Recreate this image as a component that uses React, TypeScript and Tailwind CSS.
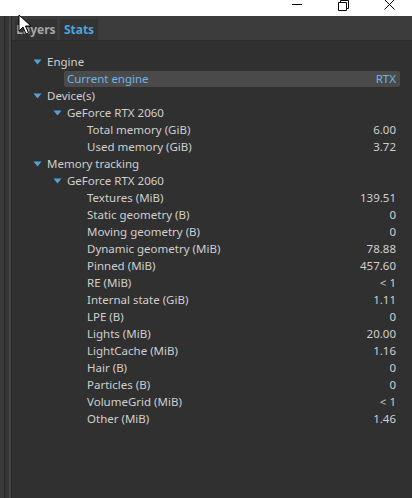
import React from 'react';

type Row = { label: string; value?: string; depth: number; open?: boolean; selected?: boolean };

const rows: Row[] = [
  { label: 'Engine', depth: 0, open: true },
  { label: 'Current engine', value: 'RTX', depth: 1, selected: true },
  { label: 'Device(s)', depth: 0, open: true },
  { label: 'GeForce RTX 2060', depth: 1, open: true },
  { label: 'Total memory (GiB)', value: '6.00', depth: 2 },
  { label: 'Used memory (GiB)', value: '3.72', depth: 2 },
  { label: 'Memory tracking', depth: 0, open: true },
  { label: 'GeForce RTX 2060', depth: 1, open: true },
  { label: 'Textures (MiB)', value: '139.51', depth: 2 },
  { label: 'Static geometry (B)', value: '0', depth: 2 },
  { label: 'Moving geometry (B)', value: '0', depth: 2 },
  { label: 'Dynamic geometry (MiB)', value: '78.88', depth: 2 },
  { label: 'Pinned (MiB)', value: '457.60', depth: 2 },
  { label: 'RE (MiB)', value: '< 1', depth: 2 },
  { label: 'Internal state (GiB)', value: '1.11', depth: 2 },
  { label: 'LPE (B)', value: '0', depth: 2 },
  { label: 'Lights (MiB)', value: '20.00', depth: 2 },
  { label: 'LightCache (MiB)', value: '1.16', depth: 2 },
  { label: 'Hair (B)', value: '0', depth: 2 },
  { label: 'Particles (B)', value: '0', depth: 2 },
  { label: 'VolumeGrid (MiB)', value: '< 1', depth: 2 },
  { label: 'Other (MiB)', value: '1.46', depth: 2 },
];

const indent = ['pl-[21px]', 'pl-[41px]', 'pl-[75px]'];

function Arrow() {
  return (
    <svg width="9" height="6" viewBox="0 0 9 6" className="mr-[5px] shrink-0">
      <path d="M0.5 0.5 H8.5 L4.5 5.5 Z" fill="#4ea3d9" />
    </svg>
  );
}

export default function App() {
  return (
    <div
      className="relative w-[412px] h-[498px] overflow-hidden bg-[#303030] text-[11.5px] text-[#cfcfcf]"
      style={{ fontFamily: '"Noto Sans", "Segoe UI", sans-serif' }}
    >
      {/* title bar */}
      <div className="h-[16px] bg-white flex justify-end items-start">
        <div className="w-[46px] h-full flex justify-center items-start pt-[4px]">
          <div className="w-[10px] h-px bg-black" />
        </div>
        <div className="w-[46px] h-full flex justify-center items-start">
          <svg width="11" height="11" viewBox="0 0 11 11">
            <path d="M0.5 2.5 H8.5 V10.5 H0.5 Z M2.5 2.5 V0.5 H10.5 V8.5 H8.5" fill="none" stroke="#000" />
          </svg>
        </div>
        <div className="w-[46px] h-full flex justify-center items-start">
          <svg width="11" height="10" viewBox="0 0 11 10">
            <path d="M0.5 -0.5 L10.5 9.5 M10.5 -0.5 L0.5 9.5" stroke="#000" />
          </svg>
        </div>
      </div>

      <div className="flex h-[482px]">
        {/* left splitter strip */}
        <div className="w-[12px] h-full flex shrink-0">
          <div className="w-[4px] bg-[#3a3a3a]" />
          <div className="w-px bg-[#282828]" />
          <div className="w-[4px] bg-[#363636]" />
          <div className="w-[2px] bg-[#454545]" />
          <div className="w-px bg-[#262626]" />
        </div>

        <div className="flex-1 flex flex-col">
          {/* tabs */}
          <div className="h-[25px] bg-[#3c3c3c] flex items-end pl-[3px] gap-[3px] border-b border-[#2b2b2b] text-[12px]">
            <div className="h-[21px] w-[42px] bg-[#333333] flex items-center justify-center font-bold text-[#a6a6a6]">
              Layers
            </div>
            <div className="h-[21px] w-[38px] bg-[#333333] flex items-center justify-center font-bold text-[#4ea3d9]">
              Stats
            </div>
          </div>

          {/* tree */}
          <div className="flex flex-col pt-[12px]">
            {rows.map((r, i) =>
              r.selected ? (
                <div key={i} className="h-[17px] flex items-center pl-[52px]">
                  <div className="w-[336px] h-[16px] bg-[#4a4a4a] rounded-[2px] flex items-center justify-between pl-[3px] pr-[4px] text-[#6fb4e2]">
                    <span>{r.label}</span>
                    <span>{r.value}</span>
                  </div>
                </div>
              ) : (
                <div key={i} className={`h-[17px] flex items-center ${indent[r.depth]}`}>
                  {r.open ? <Arrow /> : null}
                  <span className="whitespace-nowrap">{r.label}</span>
                  <span className="ml-auto mr-[16px]">{r.value}</span>
                </div>
              )
            )}
          </div>
        </div>
      </div>

      {/* mouse cursor */}
      <svg className="absolute left-[18px] top-[14px]" width="14" height="22" viewBox="0 0 14 22">
        <path d="M1 1 V17 L5 13 L8 20 L10.5 19 L7.5 12 H13 Z" fill="#fff" stroke="#000" strokeWidth="1" />
      </svg>
    </div>
  );
}
